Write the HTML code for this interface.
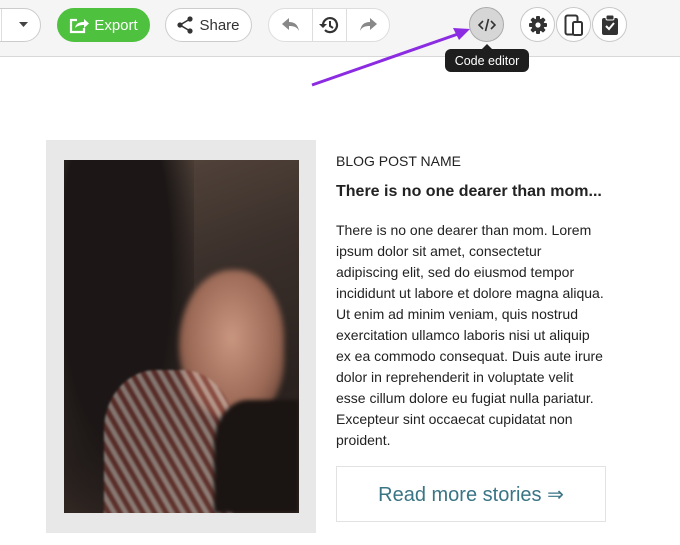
<!DOCTYPE html>
<html><head><meta charset="utf-8"><style>
*{margin:0;padding:0;box-sizing:border-box}
body{width:680px;height:545px;background:#fff;font-family:"Liberation Sans",Arial,sans-serif;position:relative;overflow:hidden;color:#222}
.tb{position:absolute;left:0;top:0;width:680px;height:57px;background:#f5f5f5;border-bottom:1px solid #d8d8d8}
.b{position:absolute;top:8px;height:34px;border:1px solid #ccc;background:#fff;border-radius:17px;display:flex;align-items:center;justify-content:center;font-size:15px;color:#333}
.c{position:absolute;top:7px;width:35px;height:35px;border-radius:50%;border:1px solid #c8c8c8;background:#fff;display:flex;align-items:center;justify-content:center}
.tip{position:absolute;left:445px;top:49px;width:84px;height:23px;background:#1e1e1e;color:#fff;font-size:12.5px;border-radius:6px;display:flex;align-items:center;justify-content:center}
.tip:before{content:"";position:absolute;top:-5px;left:37px;border:5px solid transparent;border-top:0;border-bottom-color:#1e1e1e}
.gbox{position:absolute;left:46px;top:140px;width:270px;height:393px;background:#e8e8e8}
.img{position:absolute;left:64px;top:160px;width:235px;height:353px;overflow:hidden;background:linear-gradient(160deg,#5a4a40 0%,#3b302b 35%,#2a221f 70%,#3a2d27 100%)}
.t{position:absolute;left:336px;font-size:14px;color:#222}
.p{position:absolute;left:336px;top:220px;width:270px;font-size:14px;line-height:21px;color:#222}
.btn{position:absolute;left:336px;top:466px;width:270px;height:56px;border:1px solid #e2e2e2;display:flex;align-items:center;justify-content:center;font-size:20px;color:#3a7585}
</style></head><body>
<div class="tb">
 <div class="b" style="left:-20px;width:61px;justify-content:flex-end;padding-right:12px"><div style="position:absolute;left:20px;top:0;width:1px;height:32px;background:#ddd"></div><svg width="9" height="6"><path d="M0 0h9L4.5 5z" fill="#444"/></svg></div>
 <div class="b" style="left:57px;width:93px;background:#4ec13e;border-color:#4ec13e;color:#fff;font-size:15px"><svg width="20" height="17" viewBox="0 0 20 17" style="margin-right:5px"><path d="M8 3H2v12h13v-4" fill="none" stroke="#fff" stroke-width="2.2"/><path d="M6 11c1-5 5-6 9-6V2l5 4.5-5 4.5V8c-4 0-7 1-9 3z" fill="#fff"/></svg>Export</div>
 <div class="b" style="left:165px;width:87px"><svg width="16" height="18" viewBox="0 0 16 18" style="margin-right:6px"><circle cx="13" cy="3" r="2.6" fill="#333"/><circle cx="3" cy="9" r="2.6" fill="#333"/><circle cx="13" cy="15" r="2.6" fill="#333"/><path d="M13 3L3 9l10 6" stroke="#333" stroke-width="1.6" fill="none"/></svg>Share</div>
 <div class="b" style="left:268px;width:122px;border-color:#ddd">
  <svg style="position:absolute;left:12px;top:8px" width="20" height="16" viewBox="0 0 20 16"><path d="M8 1L1 7l7 6V9c5 0 8 1 10 5-1-6-4-9-10-9z" fill="#888"/></svg>
  <div style="position:absolute;left:43px;top:0;width:1px;height:32px;background:#ddd"></div>
  <svg style="position:absolute;left:49px;top:6px" width="22" height="20" viewBox="0 0 22 20"><path d="M5 10a7 7 0 1 1 2 5" fill="none" stroke="#333" stroke-width="2.2"/><path d="M1 9h8l-4 4z" fill="#333"/><path d="M12 6v5l3 2" fill="none" stroke="#333" stroke-width="2"/></svg>
  <div style="position:absolute;left:77px;top:0;width:1px;height:32px;background:#ddd"></div>
  <svg style="position:absolute;left:89px;top:8px" width="20" height="16" viewBox="0 0 20 16"><path d="M12 1l7 6-7 6V9C7 9 4 10 2 14c1-6 4-9 10-9z" fill="#888"/></svg>
 </div>
 <div class="c" style="left:469px;background:#d6d6d6;border-color:#aaa"><svg width="18" height="14" viewBox="0 0 18 14"><path d="M5 3L1 7l4 4M13 3l4 4-4 4M10.5 1L7.5 13" fill="none" stroke="#333" stroke-width="1.6"/></svg></div>
 <div class="c" style="left:520px"><svg width="20" height="20" viewBox="0 0 20 20"><g fill="#333"><rect x="8" y="1" width="4" height="18" rx="1"/><rect x="8" y="1" width="4" height="18" rx="1" transform="rotate(45 10 10)"/><rect x="8" y="1" width="4" height="18" rx="1" transform="rotate(90 10 10)"/><rect x="8" y="1" width="4" height="18" rx="1" transform="rotate(135 10 10)"/><circle cx="10" cy="10" r="6.5"/></g><circle cx="10" cy="10" r="2.6" fill="#fff"/></svg></div>
 <div class="c" style="left:556px"><svg width="20" height="22" viewBox="0 0 20 22"><rect x="1.5" y="1.5" width="12" height="19" rx="2" fill="none" stroke="#333" stroke-width="2"/><rect x="9" y="8" width="9" height="13" rx="1.5" fill="#fff" stroke="#333" stroke-width="2"/></svg></div>
 <div class="c" style="left:592px"><svg width="16" height="20" viewBox="0 0 16 20"><rect x="0" y="3" width="16" height="17" rx="2" fill="#333"/><rect x="4" y="0" width="8" height="5" rx="1.5" fill="#333" stroke="#fff" stroke-width="1"/><path d="M4 11l3 3 5-6" fill="none" stroke="#fff" stroke-width="2"/></svg></div>
</div>
<div class="tip">Code editor</div>
<svg style="position:absolute;left:0;top:0" width="680" height="545"><path d="M312 85L458 34" stroke="#8b2be2" stroke-width="3"/><path d="M470 29l-17 -1 6 12z" fill="#8b2be2"/></svg>
<div class="gbox"></div>
<div class="img">
 <div style="position:absolute;left:0;top:0;width:130px;height:353px;background:radial-gradient(ellipse at 40% 30%,#1c1716 0%,#1c1716 50%,transparent 80%)"></div>
 <div style="position:absolute;left:115px;top:110px;width:105px;height:150px;border-radius:50% 45% 40% 50%;background:radial-gradient(ellipse at 50% 45%,#c99680,#9a6855 60%,#4a3026 100%);filter:blur(3px)"></div>
 <div style="position:absolute;left:40px;top:210px;width:130px;height:150px;background:repeating-linear-gradient(60deg,#c9b5ad 0 5px,#7e3a33 5px 10px);opacity:.6;border-radius:40% 40% 0 0;filter:blur(1px)"></div>
 <div style="position:absolute;left:150px;top:240px;width:85px;height:113px;background:#1a1412;border-radius:40% 0 0 0;filter:blur(2px)"></div>
</div>
<div class="t" style="top:153px">BLOG POST NAME</div>
<div class="t" style="top:183px;font-size:16px;font-weight:bold">There is no one dearer than mom...</div>
<div class="p">There is no one dearer than mom. Lorem ipsum dolor sit amet, consectetur adipiscing elit, sed do eiusmod tempor incididunt ut labore et dolore magna aliqua. Ut enim ad minim veniam, quis nostrud exercitation ullamco laboris nisi ut aliquip ex ea commodo consequat. Duis aute irure dolor in reprehenderit in voluptate velit esse cillum dolore eu fugiat nulla pariatur. Excepteur sint occaecat cupidatat non proident.</div>
<div class="btn">Read more stories ⇒</div>
</body></html>
